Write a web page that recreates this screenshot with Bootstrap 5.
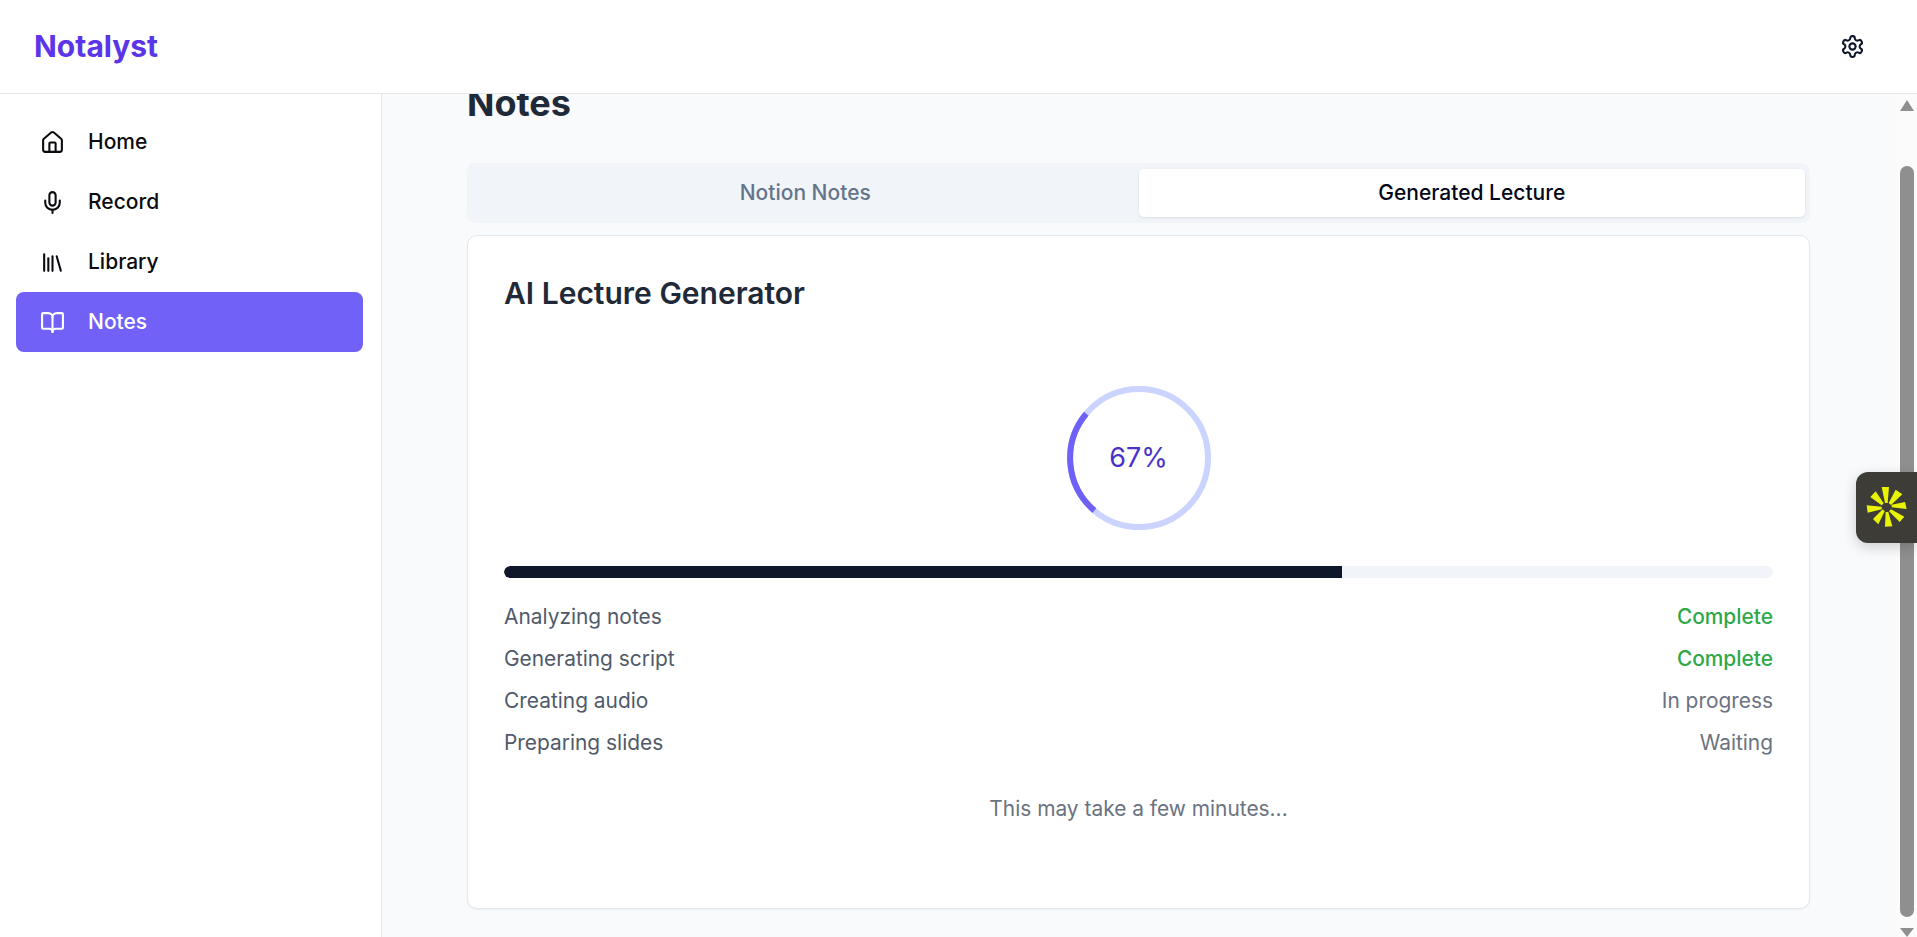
<!DOCTYPE html>
<html lang="en">
<head>
    <meta charset="UTF-8">
    <meta name="viewport" content="width=device-width, initial-scale=1.0">
    <link href="https://cdn.jsdelivr.net/npm/bootstrap@5.3.1/dist/css/bootstrap.min.css" rel="stylesheet">
    <title>Notalyst</title>
    <style>
        html, body { height: 100%; }
        body {
            font-family: 'Inter', 'Liberation Sans', sans-serif;
            background-color: #f9fafc;
            color: #1f2937;
            overflow: hidden;
        }
        .app-top {
            height: 94px;
            padding: 0 52px 0 34px;
            background: #fff;
            border-bottom: 1px solid #e5e7eb;
        }
        .app-logo { font-size: 30px; font-weight: 700; color: #5b35e8; }
        .app-body { height: calc(100% - 94px); }
        .app-side {
            width: 382px;
            padding: 18px 18px 0 16px;
            background: #fff;
            border-right: 1px solid #e5e7eb;
        }
        .side-link {
            height: 60px;
            padding-left: 24px;
            gap: 23px;
            color: #0b0b0f;
            font-size: 21px;
            font-weight: 450;
            border-radius: 8px;
            text-decoration: none;
        }
        .side-link.is-active { background: #7161f6; color: #fff; }
        .app-main { padding: 0 85px; overflow: hidden; }
        .page-title { margin: -13px 0 37px; font-size: 36px; line-height: 45px; font-weight: 700; color: #1f2937; }
        .tab-strip { height: 60px; padding: 6px 5px; background: #f1f5f9; border-radius: 8px; margin-bottom: 12px; }
        .tab-item { font-size: 21px; font-weight: 450; color: #64748b; border-radius: 5px; }
        .tab-item.is-active { background: #fff; color: #020617; box-shadow: 0 1px 3px rgba(15, 23, 42, .1); }
        .gen-card {
            height: 674px;
            padding: 36px;
            background: #fff;
            border: 1px solid #e2e8f0;
            border-radius: 10px;
            box-shadow: 0 1px 2px rgba(15, 23, 42, .05);
        }
        .gen-title { margin: 0; font-size: 30px; line-height: 42px; font-weight: 600; color: #1f2937; }
        .ring-wrap { width: 144px; height: 144px; margin: 72px auto 36px; }
        .ring-label { font-size: 27px; color: #4a32c9; }
        .gen-bar { height: 12px; background: #f1f5f9; border-radius: 6px; margin-bottom: 18px; }
        .gen-fill { background: #0f172a; border-radius: 6px 0 0 6px; }
        .step-row { height: 42px; font-size: 20.9px; color: #505a6a; }
        .step-done { color: #2fa84a; font-weight: 500; }
        .step-wait { color: #6b7280; }
        .gen-note { margin-top: 29px; font-size: 20.9px; color: #6b7280; }
        .fake-scroll { width: 22px; background: #fbfbfb; padding: 6px 3px 0 5px; }
        .arrow-up, .arrow-down { width: 0; height: 0; border-left: 7px solid transparent; border-right: 7px solid transparent; }
        .arrow-up { border-bottom: 11px solid #8f8f8f; }
        .arrow-down { border-top: 9px solid #8f8f8f; }
        .scroll-thumb { width: 14px; height: 751px; margin: 55px 0 11px; background: #8f8f8f; border-radius: 7px; }
        .float-tab {
            position: fixed;
            top: 472px;
            right: 0;
            width: 61px;
            height: 71px;
            background: #3d3c36;
            border-radius: 12px 0 0 12px;
            box-shadow: 0 4px 14px rgba(0, 0, 0, .18);
        }
    </style>
</head>
<body>
    <!-- Header -->
    <header class="app-top d-flex align-items-center justify-content-between">
        <span class="app-logo">Notalyst</span>
        <svg width="25" height="25" viewBox="0 0 24 24" fill="none" stroke="#0f172a" stroke-width="2" stroke-linecap="round" stroke-linejoin="round">
            <path d="M12.22 2h-.44a2 2 0 0 0-2 2v.18a2 2 0 0 1-1 1.73l-.43.25a2 2 0 0 1-2 0l-.15-.08a2 2 0 0 0-2.73.73l-.22.38a2 2 0 0 0 .73 2.73l.15.1a2 2 0 0 1 1 1.72v.51a2 2 0 0 1-1 1.74l-.15.09a2 2 0 0 0-.73 2.73l.22.38a2 2 0 0 0 2.73.73l.15-.08a2 2 0 0 1 2 0l.43.25a2 2 0 0 1 1 1.73V20a2 2 0 0 0 2 2h.44a2 2 0 0 0 2-2v-.18a2 2 0 0 1 1-1.73l.43-.25a2 2 0 0 1 2 0l.15.08a2 2 0 0 0 2.73-.73l.22-.39a2 2 0 0 0-.73-2.73l-.15-.08a2 2 0 0 1-1-1.74v-.5a2 2 0 0 1 1-1.74l.15-.09a2 2 0 0 0 .73-2.73l-.22-.38a2 2 0 0 0-2.73-.73l-.15.08a2 2 0 0 1-2 0l-.43-.25a2 2 0 0 1-1-1.73V4a2 2 0 0 0-2-2z"/>
            <circle cx="12" cy="12" r="3"/>
        </svg>
    </header>

    <div class="app-body d-flex">
        <!-- Sidebar -->
        <nav class="app-side flex-shrink-0 d-flex flex-column">
            <a class="side-link d-flex align-items-center" href="#">
                <svg width="25" height="25" viewBox="0 0 24 24" fill="none" stroke="currentColor" stroke-width="2" stroke-linecap="round" stroke-linejoin="round">
                    <path d="M15 21v-8a1 1 0 0 0-1-1h-4a1 1 0 0 0-1 1v8"/>
                    <path d="M3 10a2 2 0 0 1 .709-1.528l7-5.999a2 2 0 0 1 2.582 0l7 5.999A2 2 0 0 1 21 10v9a2 2 0 0 1-2 2H5a2 2 0 0 1-2-2z"/>
                </svg>
                Home
            </a>
            <a class="side-link d-flex align-items-center" href="#">
                <svg width="25" height="25" viewBox="0 0 24 24" fill="none" stroke="currentColor" stroke-width="2" stroke-linecap="round" stroke-linejoin="round">
                    <path d="M12 2a3 3 0 0 0-3 3v7a3 3 0 0 0 6 0V5a3 3 0 0 0-3-3Z"/>
                    <path d="M19 10v2a7 7 0 0 1-14 0v-2"/>
                    <line x1="12" x2="12" y1="19" y2="22"/>
                </svg>
                Record
            </a>
            <a class="side-link d-flex align-items-center" href="#">
                <svg width="25" height="25" viewBox="0 0 24 24" fill="none" stroke="currentColor" stroke-width="2" stroke-linecap="round" stroke-linejoin="round">
                    <path d="m16 6 4 14"/>
                    <path d="M12 6v14"/>
                    <path d="M8 8v12"/>
                    <path d="M4 4v16"/>
                </svg>
                Library
            </a>
            <a class="side-link is-active d-flex align-items-center" href="#">
                <svg width="25" height="25" viewBox="0 0 24 24" fill="none" stroke="currentColor" stroke-width="2" stroke-linecap="round" stroke-linejoin="round">
                    <path d="M12 7v14"/>
                    <path d="M3 18a1 1 0 0 1-1-1V4a1 1 0 0 1 1-1h5a4 4 0 0 1 4 4 4 4 0 0 1 4-4h5a1 1 0 0 1 1 1v13a1 1 0 0 1-1 1h-6a3 3 0 0 0-3 3 3 3 0 0 0-3-3z"/>
                </svg>
                Notes
            </a>
        </nav>

        <!-- Main Content -->
        <main class="app-main flex-grow-1">
            <h1 class="page-title">Notes</h1>

            <div class="tab-strip d-flex">
                <div class="tab-item w-50 d-flex align-items-center justify-content-center">Notion Notes</div>
                <div class="tab-item is-active w-50 d-flex align-items-center justify-content-center">Generated Lecture</div>
            </div>

            <div class="gen-card">
                <h2 class="gen-title">AI Lecture Generator</h2>

                <div class="ring-wrap position-relative">
                    <svg width="144" height="144" viewBox="0 0 144 144" fill="none">
                        <circle cx="72" cy="72" r="69" stroke="#cbd3ff" stroke-width="6"/>
                        <path d="M19.3 27.7A69 69 0 0 0 27.4 124.6" stroke="#6f61f5" stroke-width="6"/>
                    </svg>
                    <div class="ring-label position-absolute top-50 start-50 translate-middle">67%</div>
                </div>

                <div class="gen-bar d-flex overflow-hidden">
                    <div class="gen-fill" style="width: 66%"></div>
                </div>

                <div class="step-row d-flex align-items-center justify-content-between">
                    <span>Analyzing notes</span><span class="step-done">Complete</span>
                </div>
                <div class="step-row d-flex align-items-center justify-content-between">
                    <span>Generating script</span><span class="step-done">Complete</span>
                </div>
                <div class="step-row d-flex align-items-center justify-content-between">
                    <span>Creating audio</span><span class="step-wait">In progress</span>
                </div>
                <div class="step-row d-flex align-items-center justify-content-between">
                    <span>Preparing slides</span><span class="step-wait">Waiting</span>
                </div>

                <p class="gen-note text-center mb-0">This may take a few minutes...</p>
            </div>
        </main>

        <!-- Scrollbar -->
        <div class="fake-scroll flex-shrink-0">
            <div class="arrow-up"></div>
            <div class="scroll-thumb"></div>
            <div class="arrow-down"></div>
        </div>
    </div>

    <!-- Floating widget -->
    <div class="float-tab d-flex align-items-center justify-content-center">
        <svg width="52" height="52" viewBox="0 0 156 156" fill="#e9f500">
            <polygon points="62,15 84,15 80,63 72,63"/>
            <polygon points="104,23 124,37 90,69 83,63"/>
            <polygon points="132,60 137,81 92,76 92,68"/>
            <polygon points="130,104 116,120 84,88 90,82"/>
            <polygon points="94,133 72,134 74,90 82,90"/>
            <polygon points="52,127 36,111 65,82 71,88"/>
            <polygon points="20,92 17,70 62,74 62,82"/>
            <polygon points="28,45 44,28 68,64 62,70"/>
        </svg>
    </div>

    <script src="https://cdn.jsdelivr.net/npm/bootstrap@5.3.1/dist/js/bootstrap.bundle.min.js"></script>
</body>
</html>
